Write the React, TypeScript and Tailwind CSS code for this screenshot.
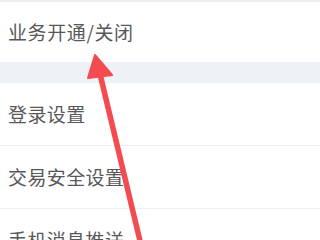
const rows = ['登录设置', '交易安全设置', '手机消息推送'];

export default function App() {
  return (
    <div
      className="relative w-[320px] h-[240px] overflow-hidden bg-white"
      style={{ fontFamily: '"Noto Sans CJK SC", "Noto Sans", sans-serif' }}
    >
      <div className="h-[2px] bg-[#eceef2]" />
      <div className="h-[60px] flex items-center pl-2 text-[19px] tracking-[0.6px] text-[#585858]">业务开通/关闭</div>
      <div className="h-[21px] bg-[#eef1f6]" />
      {rows.map((label) => (
        <div
          key={label}
          className="h-[63px] flex items-center pl-2 text-[19px] tracking-[0.4px] text-[#585858] border-b border-[#eeeff2]"
        >
          {label}
        </div>
      ))}

      {/* red annotation arrow */}
      <svg className="absolute left-0 top-0" width="320" height="240" viewBox="0 0 320 240">
        <line x1="141" y1="245" x2="100" y2="74" stroke="#f24b50" strokeWidth="5.5" strokeLinecap="round" />
        <polygon points="95,55 88,78 112,75" fill="#f24b50" strokeLinejoin="round" stroke="#f24b50" strokeWidth="2" />
      </svg>
    </div>
  );
}
